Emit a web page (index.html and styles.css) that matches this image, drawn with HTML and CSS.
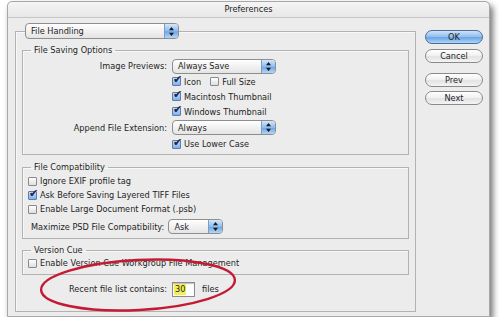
FILE: index.html
```html
<!DOCTYPE html>
<html>
  <head>
    <meta charset="utf-8">
    <title>Preferences</title>
    <link rel="stylesheet" href="styles.css">
  </head>
  <body>
    <div class="window">
      <div class="titlebar">Preferences</div>
      <div class="content">
        <fieldset class="panel">
          <legend class="popup handling">
            <span class="popupText">File Handling</span>
            <span class="arrows"><svg width="5" height="9" viewBox="0 0 5 9"><path d="M2.5 0L5 3.2H0Z M2.5 9L5 5.8H0Z"/></svg></span>
          </legend>

          <fieldset class="group saving">
            <legend>File Saving Options</legend>
            <div class="form">
              <div class="lbl">Image Previews:</div>
              <div class="popup wide">
                <span class="popupText">Always Save</span>
                <span class="arrows"><svg width="5" height="9" viewBox="0 0 5 9"><path d="M2.5 0L5 3.2H0Z M2.5 9L5 5.8H0Z"/></svg></span>
              </div>
              <div class="ctl">
                <span class="check on"></span>Icon
                <span class="check gapLeft"></span>Full Size
              </div>
              <div class="ctl"><span class="check on"></span>Macintosh Thumbnail</div>
              <div class="ctl"><span class="check on"></span>Windows Thumbnail</div>
              <div class="lbl">Append File Extension:</div>
              <div class="popup wide">
                <span class="popupText">Always</span>
                <span class="arrows"><svg width="5" height="9" viewBox="0 0 5 9"><path d="M2.5 0L5 3.2H0Z M2.5 9L5 5.8H0Z"/></svg></span>
              </div>
              <div class="ctl"><span class="check on"></span>Use Lower Case</div>
            </div>
          </fieldset>

          <fieldset class="group compat">
            <legend>File Compatibility</legend>
            <div class="row"><span class="check"></span>Ignore EXIF profile tag</div>
            <div class="row"><span class="check on"></span>Ask Before Saving Layered TIFF Files</div>
            <div class="row"><span class="check"></span>Enable Large Document Format (.psb)</div>
            <div class="row maximize">
              <span class="maxLabel">Maximize PSD File Compatibility:</span>
              <div class="popup small">
                <span class="popupText">Ask</span>
                <span class="arrows"><svg width="5" height="9" viewBox="0 0 5 9"><path d="M2.5 0L5 3.2H0Z M2.5 9L5 5.8H0Z"/></svg></span>
              </div>
            </div>
          </fieldset>

          <fieldset class="group cue">
            <legend>Version Cue</legend>
            <div class="row"><span class="check"></span>Enable Version Cue Workgroup File Management</div>
          </fieldset>

          <div class="recent">
            Recent file list contains:
            <span class="field"><span class="hilite">30</span></span>
            files
          </div>
        </fieldset>

        <div class="buttons">
          <div class="btn default">OK</div>
          <div class="btn">Cancel</div>
          <div class="btn prev">Prev</div>
          <div class="btn">Next</div>
        </div>
      </div>

      <!-- red marker circle drawn over the dialog -->
      <svg class="marker" width="483" height="316">
        <ellipse cx="131" cy="284" rx="97" ry="25" transform="rotate(-3 131 284)" fill="none" stroke="#c41a33" stroke-width="2.4"/>
      </svg>
    </div>
  </body>
</html>
```

FILE: styles.css
```css
body {
  margin: 0;
  background: #ffffff;
  font-family: "DejaVu Sans", sans-serif;
  font-size: 8.2px;
  color: #1e1e1e;
}

.window {
  position: relative;
  margin: 1px 0 0 7px;
  width: 483px;
  height: 316px;
  box-sizing: border-box;
  border: 1px solid #a8a8a8;
  border-radius: 5px 5px 0 0;
  background: #ececec;
  box-shadow: 3px 4px 6px rgba(0, 0, 0, 0.55);
}

.titlebar {
  height: 15px;
  line-height: 15px;
  text-align: center;
  border-bottom: 1px solid #c6c6c6;
  border-radius: 5px 5px 0 0;
  background: linear-gradient(#f5f5f5, #e7e7e7);
  color: #222;
}

.content {
  display: flex;
  padding: 5px 0 0 7px;
}

/* group boxes */
fieldset {
  margin: 0;
  min-width: 0;
  border: 1px solid #b2b2b2;
  box-shadow: inset 1px 1px 0 #f8f8f8;
}

.panel {
  width: 401px;
  box-sizing: border-box;
  padding: 0 6px 14px;
}

.group {
  padding: 0 5px 4px;
}

.group legend {
  margin-left: 3px;
  padding: 0 3px;
  line-height: 12px;
}

.saving {
  margin-top: 5px;
  padding-top: 2px;
  padding-bottom: 2px;
}

.compat {
  margin-top: 6px;
  padding-top: 1px;
}

.cue {
  margin-top: 5px;
}

/* popup menus */
.popup {
  display: flex;
  align-items: center;
  height: 15px;
  box-sizing: border-box;
  border: 1px solid #8e8e8e;
  border-radius: 4px;
  background: linear-gradient(#ffffff, #f1f1f1 50%, #e4e4e4);
  overflow: hidden;
}

.popupText {
  flex: 1;
  padding-left: 5px;
}

.arrows {
  display: flex;
  align-items: center;
  justify-content: center;
  width: 13px;
  height: 100%;
  border-left: 1px solid #7d9cc4;
  background: linear-gradient(#d4e6fa, #8ebcee 50%, #6ea6e6 55%, #b4d6f6);
}

.arrows svg {
  fill: #1a1a1a;
}

.handling {
  width: 154px;
  height: 16px;
  margin-left: 3px;
  padding: 0;
}

.wide {
  width: 104px;
}

.small {
  width: 55px;
}

/* form rows */
.form {
  display: grid;
  grid-template-columns: 139px auto;
  grid-template-rows: 16px 15px 15px 15px 17px 16px;
  column-gap: 5px;
  align-items: center;
}

.lbl {
  text-align: right;
}

.form .popup {
  justify-self: start;
}

.ctl {
  grid-column: 2;
  display: flex;
  align-items: center;
}

.row {
  display: flex;
  align-items: center;
  height: 14px;
}

.maximize {
  height: 15px;
  margin-top: 3px;
  padding-left: 3px;
}

.maxLabel {
  margin-right: 4px;
}

/* checkboxes */
.check {
  position: relative;
  width: 9px;
  height: 9px;
  box-sizing: border-box;
  margin-right: 3px;
  border: 1px solid #8a8a8a;
  border-radius: 1px;
  background: linear-gradient(#ffffff, #dedede);
  flex: none;
}

.check.on {
  border-color: #5a7daa;
  background: linear-gradient(#c9defa, #7fb0ea);
}

.check.on::after {
  content: "\2714";
  position: absolute;
  left: 0px;
  top: -4px;
  font-size: 11px;
  line-height: 12px;
  color: #1c2746;
}

.gapLeft {
  margin-left: 9px;
}

/* recent files */
.recent {
  display: flex;
  align-items: center;
  height: 16px;
  margin-top: 6px;
  padding-left: 47px;
}

.field {
  display: inline-block;
  width: 23px;
  height: 15px;
  box-sizing: border-box;
  margin: 0 7px 0 5px;
  padding: 1px 0 0 1px;
  border: 1px solid #8c8c8c;
  box-shadow: inset 0 1px 1px #bdbdbd;
  background: #fff;
}

.hilite {
  display: inline-block;
  padding: 0 1px;
  line-height: 11px;
  background: #f4ee55;
}

/* side buttons */
.buttons {
  display: flex;
  flex-direction: column;
  margin: 7px 0 0 9px;
  width: 58px;
}

.btn {
  height: 14px;
  line-height: 12px;
  box-sizing: border-box;
  margin-bottom: 5px;
  text-align: center;
  border: 1px solid #8a8a8a;
  border-radius: 7px;
  background: linear-gradient(#ffffff, #f0f0f0 50%, #e2e2e2 55%, #f4f4f4);
}

.btn.default {
  border-color: #4a6d9c;
  background: linear-gradient(#cfe3f8, #8fbdee 50%, #6aa4e4 55%, #b2d6f7);
}

.btn.prev {
  margin-top: 5px;
  margin-bottom: 4px;
}

.marker {
  position: absolute;
  left: -1px;
  top: -1px;
  pointer-events: none;
}
```
